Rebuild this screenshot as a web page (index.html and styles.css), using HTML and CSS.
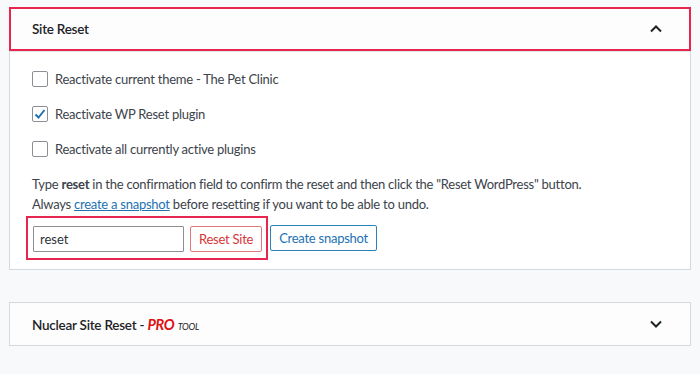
FILE: index.html
```html
<!DOCTYPE html>
<html lang="en">
<head>
    <meta charset="UTF-8">
    <title>WP Reset - Site Reset</title>
    <link rel="stylesheet" href="styles.css">
</head>
<body>
<div class="card">
    <div class="card-header highlight">
        <h3>Site Reset</h3>
        <svg class="chevron" width="14" height="10" viewBox="0 0 14 10">
            <polyline points="2,7.5 7,2.5 12,7.5" fill="none" stroke="#1d2327" stroke-width="2"/>
        </svg>
    </div>
    <div class="card-body">
        <label class="option">
            <span class="checkbox"></span>
            Reactivate current theme - The Pet Clinic
        </label>
        <label class="option">
            <span class="checkbox checked">
                <svg width="14" height="14" viewBox="0 0 14 14">
                    <polyline points="2.5,7.5 5.5,10.5 11.5,3" fill="none" stroke="#2271b1" stroke-width="2"/>
                </svg>
            </span>
            Reactivate WP Reset plugin
        </label>
        <label class="option">
            <span class="checkbox"></span>
            Reactivate all currently active plugins
        </label>
        <p class="info">Type <b>reset</b> in the confirmation field to confirm the reset and then click the "Reset WordPress" button.</p>
        <p class="info">Always <a href="#">create a snapshot</a> before resetting if you want to be able to undo.</p>
        <div class="actions">
            <div class="confirm-box">
                <input type="text" class="confirm-input" value="reset">
                <button class="btn btn-danger">Reset Site</button>
            </div>
            <button class="btn btn-primary">Create snapshot</button>
        </div>
    </div>
</div>

<div class="card collapsed">
    <div class="card-header">
        <h3>Nuclear Site Reset - <span class="pro">PRO</span> <span class="tool">tool</span></h3>
        <svg class="chevron" width="14" height="10" viewBox="0 0 14 10">
            <polyline points="2,2.5 7,7.5 12,2.5" fill="none" stroke="#1d2327" stroke-width="2"/>
        </svg>
    </div>
</div>
</body>
</html>
```

FILE: styles.css
```css
body {
    font-family: Lato, "Noto Sans", sans-serif;
    font-size: 13px;
    letter-spacing: -0.25px;
    color: #3c434a;
    background-color: #f8f9fb;
    margin: 0;
    padding: 7px 9px;
}
.card {
    background: #fff;
    border: 1px solid #d5d8dc;
    margin-bottom: 32px;
}
.card-header {
    display: flex;
    align-items: center;
    justify-content: space-between;
    height: 42px;
    padding: 0 26px 0 21px;
    background: #fdfdfd;
}
.card-header.highlight {
    border: 2px solid #e8254f;
    margin: -1px -1px 0 -1px;
    height: 40px;
}
.card-header h3 {
    margin: 0;
    font-size: 13.5px;
    font-weight: 600;
    color: #1d2327;
}
.collapsed .card-header {
    padding-left: 22px;
    padding-right: 27px;
}
.chevron {
    display: block;
}
.pro {
    color: #dd1111;
    font-weight: 700;
    font-style: italic;
    font-size: 14.5px;
}
.tool {
    font-variant: small-caps;
    font-style: italic;
    font-weight: 400;
    font-size: 12.5px;
}
.card-body {
    padding: 17px 22px 9px 22px;
    border-top: 1px solid #e2e4e7;
}
.option {
    display: flex;
    align-items: center;
    height: 20px;
    margin-bottom: 15px;
}
.checkbox {
    width: 14px;
    height: 14px;
    border: 1px solid #8c8f94;
    border-radius: 2px;
    margin-right: 7px;
    display: flex;
    align-items: center;
    justify-content: center;
}
.info {
    margin: 0;
    line-height: 20px;
}
.info a {
    color: #2271b1;
}
.actions {
    display: flex;
    align-items: center;
    margin-top: 2px;
    margin-left: -6px;
}
.confirm-box {
    display: flex;
    align-items: center;
    border: 2px solid #e8254f;
    padding: 8px 4px 6px 5px;
    margin-right: 2px;
}
.confirm-input {
    width: 137px;
    height: 24px;
    padding: 0 6px;
    border: 1px solid #8c8f94;
    border-radius: 1px;
    font-family: inherit;
    font-size: 13px;
    color: #2c3338;
    margin-right: 6px;
}
.btn {
    height: 26px;
    padding: 0 8px;
    background: #fff;
    border-radius: 2px;
    font-family: inherit;
    font-size: 13px;
    letter-spacing: -0.25px;
    cursor: pointer;
}
.btn-danger {
    border: 1px solid #e07a7c;
    color: #d63638;
}
.btn-primary {
    border: 1px solid #2d83b8;
    color: #2271b1;
}
```
